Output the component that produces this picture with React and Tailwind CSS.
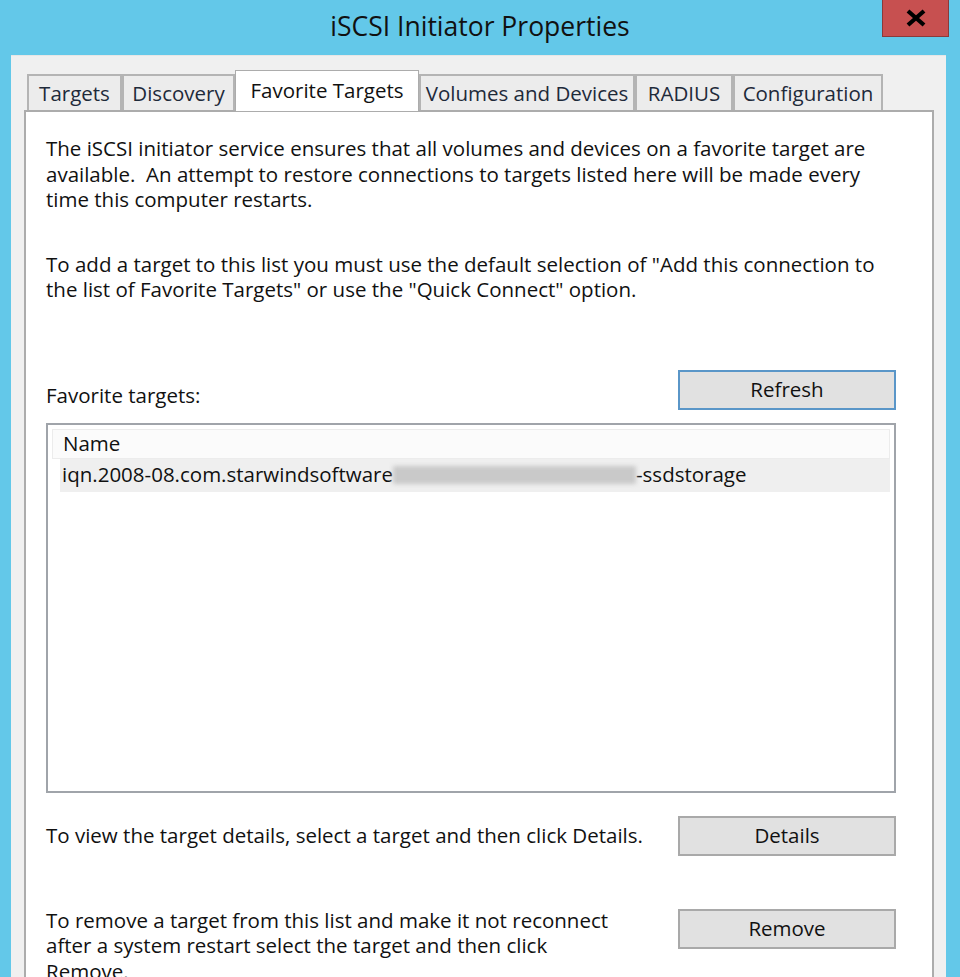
import React from "react";

const font = { fontFamily: '"Open Sans", "Noto Sans", sans-serif' };

function Tab({ label, selected, w }) {
  if (selected) {
    return (
      <div
        className="relative z-10 h-[41px] -mb-px flex items-start justify-center border border-b-0 border-[#acacac] bg-white pt-[4px] text-[20.5px] text-[#111]"
        style={{ width: w }}
      >
        {label}
      </div>
    );
  }
  return (
    <div
      className="mt-[4px] h-[36px] flex items-center justify-center border-2 border-b-0 border-[#b4b4b4] bg-[#ececec] text-[20.5px] text-[#1e2a3a]"
      style={{ width: w }}
    >
      {label}
    </div>
  );
}

function Btn({ children, focus }) {
  return (
    <div
      className={
        "w-[218px] h-[40px] flex items-center justify-center bg-[#e1e1e1] text-[20.5px] text-[#111] " +
        (focus ? "border-2 border-[#5a96c8]" : "border-2 border-[#a9a9a9]")
      }
    >
      {children}
    </div>
  );
}

export default function App() {
  return (
    <div
      className="w-[960px] h-[977px] bg-[#63c8e9] overflow-hidden flex flex-col relative"
      style={font}
    >
      {/* title bar */}
      <div className="h-[55px] shrink-0 flex items-center justify-center pb-[1px]">
        <span className="text-[26.5px] text-[#111]">iSCSI Initiator Properties</span>
      </div>
      <div className="absolute left-[882px] top-0 w-[67px] h-[37px] bg-[#c75050] border border-[#8b3a3a] border-t-0 flex items-center justify-center">
        <svg width="22" height="18" viewBox="0 0 22 18">
          <path d="M3 2 L19 16 M19 2 L3 16" stroke="#000" strokeWidth="4.2" strokeLinecap="butt" />
        </svg>
      </div>

      {/* dialog body */}
      <div className="flex-1 ml-[11px] mr-[14px] bg-[#f0f0f0] border-t border-[#e6e6e6] pl-[13px] pr-[12px] pt-[14px] flex flex-col">
        {/* tabs */}
        <div className="flex pl-[3px] items-start h-[40px]">
          <Tab label="Targets" w={95} />
          <Tab label="Discovery" w={113} />
          <Tab label="Favorite Targets" w={184} selected />
          <Tab label="Volumes and Devices" w={216} />
          <Tab label="RADIUS" w={98} />
          <Tab label="Configuration" w={150} />
        </div>

        {/* tab page */}
        <div className="flex-1 bg-white border-2 border-[#acacac] pl-[20px] pr-[36px] pt-[24px] text-[20.5px] leading-[25.5px] text-[#111]">
          <p>
            The iSCSI initiator service ensures that all volumes and devices on a favorite target are
            <br />
            available.&nbsp; An attempt to restore connections to targets listed here will be made every
            <br />
            time this computer restarts.
          </p>
          <p className="mt-[39px]">
            To add a target to this list you must use the default selection of "Add this connection to
            <br />
            the list of Favorite Targets" or use the "Quick Connect" option.
          </p>

          <div className="mt-[67px] flex items-end justify-between">
            <span className="mb-[1px]">Favorite targets:</span>
            <Btn focus>Refresh</Btn>
          </div>

          {/* list view */}
          <div className="mt-[13px] h-[370px] border-2 border-[#a0a4aa] bg-white p-[4px] pt-[4px]">
            <div className="h-[30px] bg-[#fbfbfb] border border-[#ececec] flex items-center pl-[10px]">
              Name
            </div>
            <div className="ml-[8px] h-[33px] bg-[#efefef] flex items-center pl-[2px] whitespace-nowrap">
              <span>iqn.2008-08.com.starwindsoftware</span>
              <span className="inline-block w-[243px] h-[18px] bg-[#c9c9c9] blur-[2px]"></span>
              <span>-ssdstorage</span>
            </div>
          </div>

          <div className="mt-[23px] flex items-center justify-between">
            <span>To view the target details, select a target and then click Details.</span>
            <Btn>Details</Btn>
          </div>

          <div className="mt-[53px] flex items-start justify-between">
            <span className="-mt-[1px]">
              To remove a target from this list and make it not reconnect
              <br />
              after a system restart select the target and then click
              <br />
              Remove.
            </span>
            <Btn>Remove</Btn>
          </div>
        </div>
      </div>
    </div>
  );
}
